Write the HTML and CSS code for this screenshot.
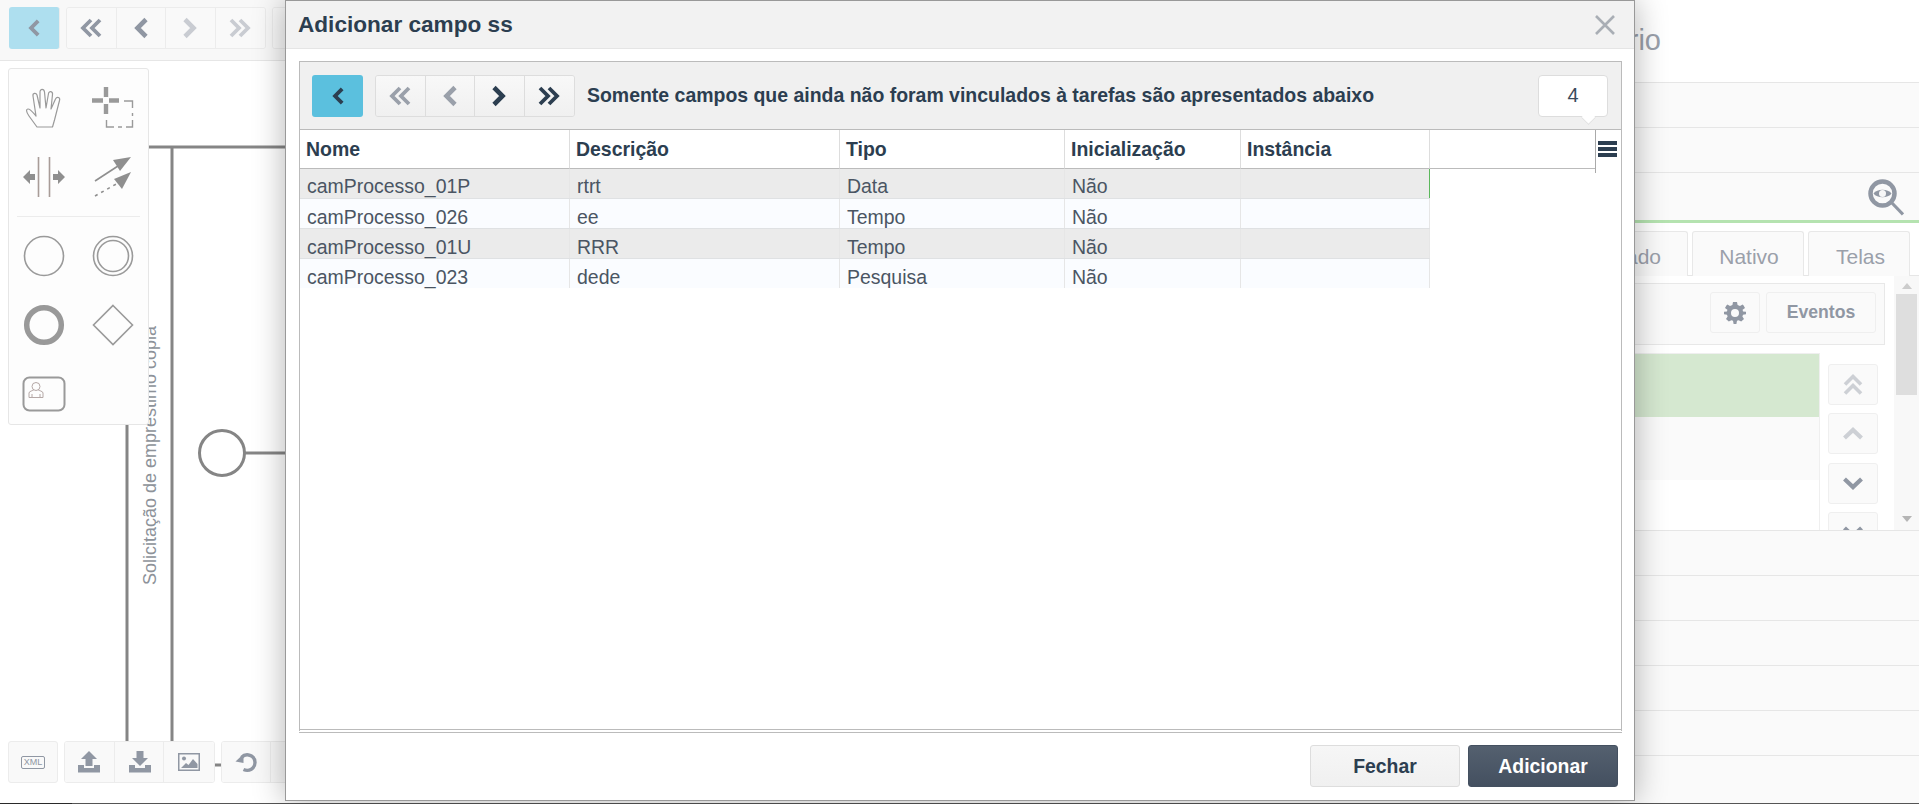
FILE: index.html
```html
<!DOCTYPE html>
<html lang="pt">
<head>
<meta charset="utf-8">
<title>Adicionar campo ss</title>
<link rel="stylesheet" href="styles.css">
</head>
<body>
<svg class="defs" aria-hidden="true">
  <symbol id="i-left" viewBox="0 0 24 24"><polyline points="17,3.5 8.5,12 17,20.5" fill="none" stroke="currentColor" stroke-width="4.6"/></symbol>
  <symbol id="i-right" viewBox="0 0 24 24"><polyline points="7,3.5 15.5,12 7,20.5" fill="none" stroke="currentColor" stroke-width="4.6"/></symbol>
  <symbol id="i-dleft" viewBox="0 0 24 24"><polyline points="12,4 4,12 12,20" fill="none" stroke="currentColor" stroke-width="3.8"/><polyline points="21,4 13,12 21,20" fill="none" stroke="currentColor" stroke-width="3.8"/></symbol>
  <symbol id="i-dright" viewBox="0 0 24 24"><polyline points="3,4 11,12 3,20" fill="none" stroke="currentColor" stroke-width="3.8"/><polyline points="12,4 20,12 12,20" fill="none" stroke="currentColor" stroke-width="3.8"/></symbol>
  <symbol id="i-up" viewBox="0 0 24 24"><polyline points="3.5,16 12,8 20.5,16" fill="none" stroke="currentColor" stroke-width="4.2"/></symbol>
  <symbol id="i-down" viewBox="0 0 24 24"><polyline points="3.5,8 12,16 20.5,8" fill="none" stroke="currentColor" stroke-width="4.2"/></symbol>
  <symbol id="i-dup" viewBox="0 0 24 24"><polyline points="4,11.5 12,3.5 20,11.5" fill="none" stroke="currentColor" stroke-width="3.6"/><polyline points="4,20.5 12,12.5 20,20.5" fill="none" stroke="currentColor" stroke-width="3.6"/></symbol>
</svg>

<div class="app">
  <section class="left">
    <div class="l-toolbar">
      <button class="tb tb-blue"><svg class="ic ic-sm"><use href="#i-left"/></svg></button>
      <div class="tb-group">
        <button class="tb"><svg class="ic"><use href="#i-dleft"/></svg></button>
        <button class="tb"><svg class="ic"><use href="#i-left"/></svg></button>
        <button class="tb dim"><svg class="ic"><use href="#i-right"/></svg></button>
        <button class="tb dim"><svg class="ic"><use href="#i-dright"/></svg></button>
      </div>
      <div class="tb-group"><button class="tb"></button></div>
    </div>

    <div class="canvas">
      <svg class="diagram" width="1400" height="743" viewBox="0 60 1400 743">
        <g fill="none" stroke="#858585" stroke-width="3">
          <path d="M127 146H290M127 146V741M172 146V741"/>
          <circle cx="222" cy="452" r="22.5"/>
          <path d="M245 452H290M214 764H222"/>
        </g>
        <text class="lane" transform="translate(156 584) rotate(-90)">Solicitação de empréstimo cópia</text>
      </svg>

      <div class="palette">
        <div class="p-cell">
          <svg width="38" height="42" viewBox="0 0 38 42" fill="none" stroke="#9a9a9a" stroke-width="1.2" stroke-linejoin="round"><path d="M12 40 L4 29 C1 25 1 22 3 22 C6 22 9 27 11 29 L8 9 C7.5 6 11 5.5 12 8 L15 21 L15 5 C15 1.5 19 1.5 19.5 5 L21 21 L23.5 6.5 C24 3.5 28 4 27.5 7.5 L26 22 L30.5 12 C32 9 35.5 10.5 34.5 13.5 L29.5 33 L27.5 40 Z"/></svg>
        </div>
        <div class="p-cell">
          <svg width="42" height="41" viewBox="0 0 42 41" fill="none"><path d="M14 0V10M14 17V27M0 13.5H11M17 13.5H27" stroke="#9a9a9a" stroke-width="4.4"/><path d="M32 14H40.5V21M40.5 26V29M40.5 33V40H34M30 40H26M22 40H14.500V33" stroke="#9a9a9a" stroke-width="1.4"/></svg>
        </div>
        <div class="p-cell">
          <svg width="42" height="42" viewBox="0 0 42 42" fill="#8f8f8f"><path d="M15.500 1V41M26.500 1V41" stroke="#a89c98" stroke-width="1.6"/><path d="M0 21L7 14V18H12V24H7V28ZM42 21L35 14V18H30V24H35V28Z"/></svg>
        </div>
        <div class="p-cell">
          <svg width="38" height="42" viewBox="0 0 38 42" fill="#8f8f8f"><path d="M1 25L24 10" stroke="#8f8f8f" stroke-width="1.6"/><path d="M37 1L19 4L26 15Z"/><path d="M1 40L24 27" stroke="#8f8f8f" stroke-width="1.6" stroke-dasharray="3 4"/><path d="M37 16L20 23L28 33Z"/></svg>
        </div>
        <hr class="p-sep">
        <div class="p-cell"><svg width="42" height="42" fill="none" stroke="#9a9a9a" stroke-width="1.6"><circle cx="21" cy="21" r="19.500"/></svg></div>
        <div class="p-cell"><svg width="42" height="42" fill="none" stroke="#9a9a9a" stroke-width="1.6"><circle cx="21" cy="21" r="19.500"/><circle cx="21" cy="21" r="15.500"/></svg></div>
        <div class="p-cell"><svg width="42" height="42" fill="none" stroke="#999" stroke-width="5.5"><circle cx="21" cy="21" r="17.300"/></svg></div>
        <div class="p-cell"><svg width="42" height="42" fill="none" stroke="#9a9a9a" stroke-width="1.6"><path d="M21 1.500L40.500 21L21 40.500L1.500 21Z"/></svg></div>
        <div class="p-cell"><svg width="44" height="36" fill="none"><rect x="1.500" y="1.500" width="41" height="33" rx="6" stroke="#9a9a9a" stroke-width="2"/><circle cx="14" cy="10.500" r="4" stroke="#b5a8a6"/><path d="M7 21.500V17C7 15 11 15 12 13.500M21 21.500V17C21 15 17 15 16 13.500M7 21.500H21M10 18V21.500M18 18V21.500" stroke="#b5a8a6"/></svg></div>
      </div>

      <div class="l-bottom">
        <button class="tb tb-single"><span class="xml">XML</span></button>
        <div class="tb-group">
          <button class="tb"><svg width="24" height="22" viewBox="0 0 24 22" fill="#9097a3"><path d="M12 0L20 8H15.500V15H8.500V8H4Z"/><path d="M1 14H7V17H17V14H23V21.500H1Z"/></svg></button>
          <button class="tb"><svg class="nudge-2" width="24" height="22" viewBox="0 0 24 22" fill="#9097a3"><path d="M8.500 0H15.500V7H20L12 15L4 7H8.500Z"/><path d="M1 14H7V17H17V14H23V21.500H1Z"/></svg></button>
          <button class="tb"><svg class="nudge-1" width="22" height="18" viewBox="0 0 22 18" fill="#9097a3"><path fill-rule="evenodd" d="M0 0H22V18H0ZM1.500 1.500V16.500H20.500V1.500Z"/><circle cx="6" cy="5.500" r="2"/><path d="M3 15L8 10L10.500 12L15 6L19.500 11V15Z"/></svg></button>
        </div>
        <div class="tb-group">
          <button class="tb"><svg width="24" height="24" viewBox="0 0 24 24" fill="none" stroke="#9097a3" stroke-width="3.4"><path d="M7.500 7.500C12 2.500 21 5 21 12.500C21 18.500 15 22 9.500 19.500"/><path d="M1.500 11.500L9.500 13V4Z" fill="#9097a3" stroke="none"/></svg></button>
          <button class="tb"></button>
        </div>
      </div>
    </div>
  </section>

  <aside class="right">
    <div class="r-title">Formulário</div>
    <div class="r-row"></div>
    <div class="r-row"></div>
    <div class="r-search">
      <svg width="36" height="37" viewBox="0 0 36 37" fill="none"><circle cx="14.500" cy="14.500" r="12" stroke="#9097a3" stroke-width="4.5"/><path d="M24 24L35 35.500" stroke="#9097a3" stroke-width="3.2"/><path d="M5.500 14.500C9 9.500 20 9.500 23.500 14.500C20 19.500 9 19.500 5.500 14.500Z" fill="#9097a3"/><circle cx="14.500" cy="14.500" r="3.500" fill="#f7f7f7"/></svg>
    </div>
    <div class="r-tabs">
      <div class="r-tab r-tab-a">Personalizado</div>
      <div class="r-tab r-tab-b">Nativo</div>
      <div class="r-tab r-tab-c">Telas</div>
    </div>
    <div class="r-content">
      <div class="r-main">
        <div class="r-tools">
          <button class="r-btn r-gear"><svg width="22" height="22" viewBox="0 0 22 22" fill="#9097a3"><path fill-rule="evenodd" d="M9 0H13L13.600 3L16 4L18.600 2.400L19.600 3.400L21 6L18.600 7.800L19 9.400L22 9.800V12.200L19 12.800L18.400 14.400L20 17L17.200 19.600L14.600 18.200L13 18.800L12.400 22H9.600L9 18.800L7.400 18.200L4.800 19.600L2 17L3.600 14.400L3 12.800L0 12.200V9.800L3 9.400L3.400 7.800L1 6L2.400 3.400L3.400 2.400L6 4L8.400 3ZM11 7A4 4 0 1 0 11 15A4 4 0 1 0 11 7Z"/></svg></button>
          <button class="r-btn r-ev">Eventos</button>
        </div>
        <div class="r-body">
          <div class="r-list">
            <div class="r-item r-item-sel"></div>
            <div class="r-item r-item-alt"></div>
          </div>
          <div class="r-side">
            <button class="r-sbtn dim"><svg class="ic"><use href="#i-dup"/></svg></button>
            <button class="r-sbtn dim"><svg class="ic"><use href="#i-up"/></svg></button>
            <button class="r-sbtn"><svg class="ic"><use href="#i-down"/></svg></button>
            <button class="r-sbtn"><svg class="ic"><use href="#i-down"/></svg></button>
          </div>
        </div>
      </div>
      <div class="r-scroll">
        <span class="arr arr-up"></span>
        <span class="thumb"></span>
        <span class="arr arr-down"></span>
      </div>
    </div>
    <div class="r-line"></div>
    <div class="r-line"></div>
    <div class="r-line"></div>
    <div class="r-line"></div>
    <div class="r-line"></div>
    <div class="r-line"></div>
  </aside>
</div>
<div class="strip"></div>

<div class="modal">
  <header class="m-head">
    <h1 class="m-title">Adicionar campo ss</h1>
    <svg class="m-close" width="20" height="20" viewBox="0 0 20 20" stroke="#a9aeb5" stroke-width="2.6"><path d="M1 1L19 19M19 1L1 19"/></svg>
  </header>
  <div class="m-body">
    <div class="panel">
      <div class="p-toolbar">
        <button class="mb mb-blue"><svg class="ic ic-sm"><use href="#i-left"/></svg></button>
        <div class="mb-group">
          <button class="mb off"><svg class="ic"><use href="#i-dleft"/></svg></button>
          <button class="mb off"><svg class="ic"><use href="#i-left"/></svg></button>
          <button class="mb"><svg class="ic"><use href="#i-right"/></svg></button>
          <button class="mb"><svg class="ic"><use href="#i-dright"/></svg></button>
        </div>
        <div class="p-note">Somente campos que ainda não foram vinculados à tarefas são apresentados abaixo</div>
        <div class="count">4</div>
      </div>
      <div class="grid">
        <div class="g-head">
          <div class="g-hc">Nome</div>
          <div class="g-hc">Descrição</div>
          <div class="g-hc">Tipo</div>
          <div class="g-hc">Inicialização</div>
          <div class="g-hc">Instância</div>
          <div class="g-hc"></div>
          <div class="g-menu"><span></span><span></span><span></span></div>
        </div>
        <div class="g-row g-row-first"><div class="g-c">camProcesso_01P</div><div class="g-c">rtrt</div><div class="g-c">Data</div><div class="g-c">Não</div><div class="g-c"></div></div>
        <div class="g-row"><div class="g-c">camProcesso_026</div><div class="g-c">ee</div><div class="g-c">Tempo</div><div class="g-c">Não</div><div class="g-c"></div></div>
        <div class="g-row"><div class="g-c">camProcesso_01U</div><div class="g-c">RRR</div><div class="g-c">Tempo</div><div class="g-c">Não</div><div class="g-c"></div></div>
        <div class="g-row"><div class="g-c">camProcesso_023</div><div class="g-c">dede</div><div class="g-c">Pesquisa</div><div class="g-c">Não</div><div class="g-c"></div></div>
      </div>
    </div>
  </div>
  <footer class="m-foot">
    <button class="f-btn">Fechar</button>
    <button class="f-btn f-primary">Adicionar</button>
  </footer>
</div>
</body>
</html>
```
FILE: styles.css
```css
* { box-sizing: border-box; }
html, body { margin: 0; height: 100%; }
body {
  width: 1919px;
  height: 804px;
  position: relative;
  overflow: hidden;
  background: #fff;
  font-family: "Liberation Sans", Arial, sans-serif;
  color: #2c3e50;
}
button { font: inherit; padding: 0; margin: 0; display: flex; align-items: center; justify-content: center; }
.defs { position: absolute; width: 0; height: 0; }
.ic { width: 24px; height: 24px; display: block; }
.ic-sm { width: 20px; height: 20px; }
.nudge-1 { margin-left: 1px; }
.nudge-2 { margin-left: 2px; }

.app { display: flex; height: 803px; }
.strip { height: 1px; background: linear-gradient(90deg, #2a2a2a 72px, #555 72px); }

/* left */
.left { width: 1400px; flex: none; display: flex; flex-direction: column; }
.l-toolbar {
  height: 61px;
  flex: none;
  display: flex;
  gap: 6px;
  padding: 7px 0 0 9px;
  background: #f8f8f8;
  border-bottom: 1px solid #e6e6e6;
  align-items: flex-start;
}
.tb {
  width: 49.5px;
  height: 42px;
  flex: none;
  background: #f9f9f9;
  border: 0;
  border-right: 1px solid #ececec;
  color: #9097a3;
}
.tb:last-child { border-right: 0; }
.tb.dim { color: #c9ccd2; }
.tb-blue { width: 51px; background: #aedfef; border-radius: 3px; }
.tb-group {
  display: flex;
  height: 42px;
  border: 1px solid #ececec;
  border-radius: 3px;
  overflow: hidden;
}
.tb-group .tb { height: 40px; }
.tb-single { width: 50px; border: 1px solid #ececec; border-radius: 3px; }

.canvas { position: relative; flex: 1; background: #fff; }
.diagram { position: absolute; left: 0; top: 0; display: block; }
.lane { font-size: 18px; fill: #8d9299; font-family: "Liberation Sans", Arial, sans-serif; }

.palette {
  position: absolute;
  left: 8px;
  top: 7px;
  width: 141px;
  height: 357px;
  padding: 4px 0 0;
  background: #fdfdfd;
  border: 1px solid #e6e6e6;
  border-radius: 3px;
  display: grid;
  grid-template-columns: 69px 69px;
  grid-template-rows: 69px 69px 10px;
  grid-auto-rows: 69px;
}
.p-cell { display: flex; align-items: center; justify-content: center; }
.p-sep {
  grid-column: 1 / 3;
  height: 1px;
  width: 123px;
  margin: 5px 0 0 8px;
  border: 0;
  background: #ececec;
  align-self: start;
}

.l-bottom {
  position: absolute;
  left: 8px;
  top: 680px;
  display: flex;
  gap: 6px;
}
.xml {
  font-size: 9px;
  line-height: 11px;
  color: #9097a3;
  border: 1px solid #9097a3;
  border-radius: 2px;
  padding: 0 2px;
}

/* right */
.right { flex: 1; min-width: 0; display: flex; flex-direction: column; background: #fff; }
.r-title {
  height: 83px;
  flex: none;
  padding: 23px 258px 0 0;
  text-align: right;
  font-size: 29px;
  line-height: 34px;
  color: #9aa0aa;
  border-bottom: 1px solid #e6e6e6;
}
.r-row { height: 45px; flex: none; background: #fafafa; border-bottom: 1px solid #e6e6e6; }
.r-search {
  height: 50px;
  flex: none;
  background: #fafafa;
  border-bottom: 3px solid #b5e3b0;
  padding: 6px 15px 0 0;
  display: flex;
  justify-content: flex-end;
  align-items: flex-start;
}
.r-tabs {
  height: 53px;
  flex: none;
  padding: 8px 9px 0 0;
  display: flex;
  justify-content: flex-end;
  gap: 4px;
  border-bottom: 1px solid #e6e6e6;
}
.r-tab {
  height: 45px;
  background: #fafafa;
  border: 1px solid #e8e8e8;
  border-bottom: 0;
  border-radius: 3px 3px 0 0;
  font-size: 21px;
  line-height: 50px;
  color: #9aa0aa;
  text-align: center;
}
.r-tab-a { width: 180px; text-align: right; padding-right: 26px; }
.r-tab-b { width: 112px; padding-left: 2px; }
.r-tab-c { width: 102px; padding-left: 3px; }
.r-content { height: 254px; flex: none; display: flex; overflow: hidden; }
.r-main { flex: 1; min-width: 0; padding: 7px 9px 0 0; }
.r-tools {
  height: 62px;
  border: 1px solid #e8e8e8;
  background: #fafafa;
  display: flex;
  justify-content: flex-end;
  align-items: flex-start;
  gap: 6px;
  padding: 8px 8px 0 0;
}
.r-btn {
  height: 41px;
  background: #fafafa;
  border: 1px solid #efefef;
  border-radius: 3px;
  font-weight: bold;
  font-size: 17.6px;
  color: #9097a3;
}
.r-gear { width: 50px; }
.r-ev { width: 110px; }
.r-body { display: flex; padding-top: 8px; gap: 8px; }
.r-list { flex: 1; min-width: 0; border-top: 1px solid #efefef; border-right: 1px solid #efefef; height: 200px; }
.r-item { height: 63px; }
.r-item-sel { background: #d5e8d0; }
.r-item-alt { background: #fafafa; }
.r-side { width: 57px; flex: none; padding-top: 11px; display: flex; flex-direction: column; gap: 8.3px; }
.r-sbtn {
  width: 50px;
  height: 41px;
  flex: none;
  background: #fafafa;
  border: 1px solid #efefef;
  border-radius: 3px;
  color: #9097a3;
}
.r-sbtn.dim { color: #cdd0d5; }
.r-scroll {
  width: 25px;
  flex: none;
  background: #f8f8f8;
  display: flex;
  flex-direction: column;
  align-items: center;
  padding-top: 7px;
  position: relative;
}
.arr { width: 0; height: 0; border-left: 5.5px solid transparent; border-right: 5.5px solid transparent; }
.arr-up { border-bottom: 6px solid #ccc; }
.arr-down { border-top: 6px solid #b5b5b5; position: absolute; bottom: 8px; }
.thumb { width: 21px; height: 101px; background: #dedede; margin-top: 5px; }
.r-line { height: 45px; flex: none; background: #fafafa; border-top: 1px solid #e6e6e6; }
.r-line:last-child { height: 48px; }

/* modal */
.modal {
  position: absolute;
  left: 285px;
  top: 0;
  width: 1350px;
  height: 801px;
  background: #fff;
  border: 1px solid #999;
  box-shadow: 0 0 30px rgba(0, 0, 0, 0.3);
  display: flex;
  flex-direction: column;
}
.m-head {
  height: 48px;
  flex: none;
  background: #f2f2f2;
  border-bottom: 1px solid #e5e5e5;
  display: flex;
  align-items: center;
  justify-content: space-between;
  padding: 0 19px 0 12px;
}
.m-title { margin: 0; font-size: 22.6px; line-height: 24px; font-weight: bold; color: #2c3e50; }
.m-body { flex: 1; min-height: 0; padding: 12px 12px 0 13px; }
.panel {
  height: 100%;
  border: 1px solid #bbb;
  border-bottom: 4px double #bbb;
  display: flex;
  flex-direction: column;
}
.p-toolbar {
  height: 68px;
  flex: none;
  background: #f0f0f0;
  border-bottom: 1px solid #bbb;
  display: flex;
  align-items: flex-start;
  padding: 13px 0 0 12px;
  position: relative;
}
.mb {
  width: 49.5px;
  height: 40px;
  background: linear-gradient(#f8f8f8, #f0f0f0);
  border: 0;
  border-right: 1px solid #ddd;
  color: #2c3e50;
}
.mb:last-child { border-right: 0; }
.mb.off { color: #9aa0aa; }
.mb-blue { width: 51px; height: 42px; background: #5bc0de; border: 0; border-radius: 3px; }
.mb-group {
  display: flex;
  margin-left: 12px;
  height: 42px;
  border: 1px solid #ddd;
  border-radius: 3px;
  overflow: hidden;
}
.p-note { margin-left: 12px; font-size: 19.47px; line-height: 40px; font-weight: bold; color: #2c3e50; flex: 1; white-space: nowrap; }
.count {
  position: relative;
  width: 70px;
  height: 42px;
  margin-right: 13px;
  flex: none;
  background: #fff;
  border: 1px solid #ddd;
  border-radius: 4px;
  text-align: center;
  font-size: 20px;
  line-height: 38px;
  color: #3a4a5c;
}
.count::after {
  content: "";
  position: absolute;
  left: 43px;
  top: 35px;
  width: 12px;
  height: 12px;
  background: #fff;
  border-right: 1px solid #ddd;
  border-bottom: 1px solid #ddd;
  transform: rotate(45deg) scale(.8);
}
.grid { flex: 1; background: #fff; }
.g-head { display: flex; height: 39px; }
.g-hc {
  position: relative;
  height: 39px;
  border-right: 1px solid #ddd;
  border-bottom: 1px solid #bbb;
  padding-left: 6px;
  font-size: 19.47px;
  font-weight: bold;
  line-height: 38px;
  color: #2c3e50;
}
.g-hc:nth-child(1), .g-c:nth-child(1) { width: 270px; }
.g-hc:nth-child(2), .g-c:nth-child(2) { width: 270px; }
.g-hc:nth-child(3), .g-c:nth-child(3) { width: 225px; }
.g-hc:nth-child(4), .g-c:nth-child(4) { width: 176px; }
.g-hc:nth-child(5), .g-c:nth-child(5) { width: 189px; }
.g-hc:nth-child(6) { width: 166px; border-right-color: #aaa; }
.g-hc:nth-child(6)::after {
  content: "";
  position: absolute;
  right: -1px;
  top: 38px;
  width: 1px;
  height: 5px;
  background: #aaa;
}
.g-menu { flex: 1; padding: 11px 0 0 2px; }
.g-menu span { display: block; width: 19px; height: 4px; background: #2c3e50; margin-bottom: 2px; }
.g-row { display: flex; height: 30px; width: 1130px; border-bottom: 1px solid #dfe1e3; }
.g-row:nth-of-type(even) { background: #ebebeb; }
.g-row:nth-of-type(odd) { background: #fafcff; }
.g-row:last-child { border-bottom: 0; height: 29px; }
.g-c {
  border-right: 1px solid #e6e6e6;
  padding-left: 7px;
  font-size: 19.47px;
  line-height: 36px;
  color: #4a5563;
  white-space: nowrap;
}
.g-row-first .g-c { line-height: 34px; }
.g-row-first .g-c:nth-child(5) { border-right: 1px solid #5cb85c; }
.m-foot {
  height: 67px;
  flex: none;
  display: flex;
  justify-content: flex-end;
  gap: 8px;
  padding: 12px 16px 0 0;
}
.f-btn {
  width: 150px;
  height: 42px;
  background: linear-gradient(#f6f6f6, #f0f0f0);
  border: 1px solid #ddd;
  border-radius: 3px;
  font-size: 19.4px;
  font-weight: bold;
  color: #2c3e50;
}
.f-primary { background: linear-gradient(#54606f, #445060); border-color: #445060; color: #fff; }
```
